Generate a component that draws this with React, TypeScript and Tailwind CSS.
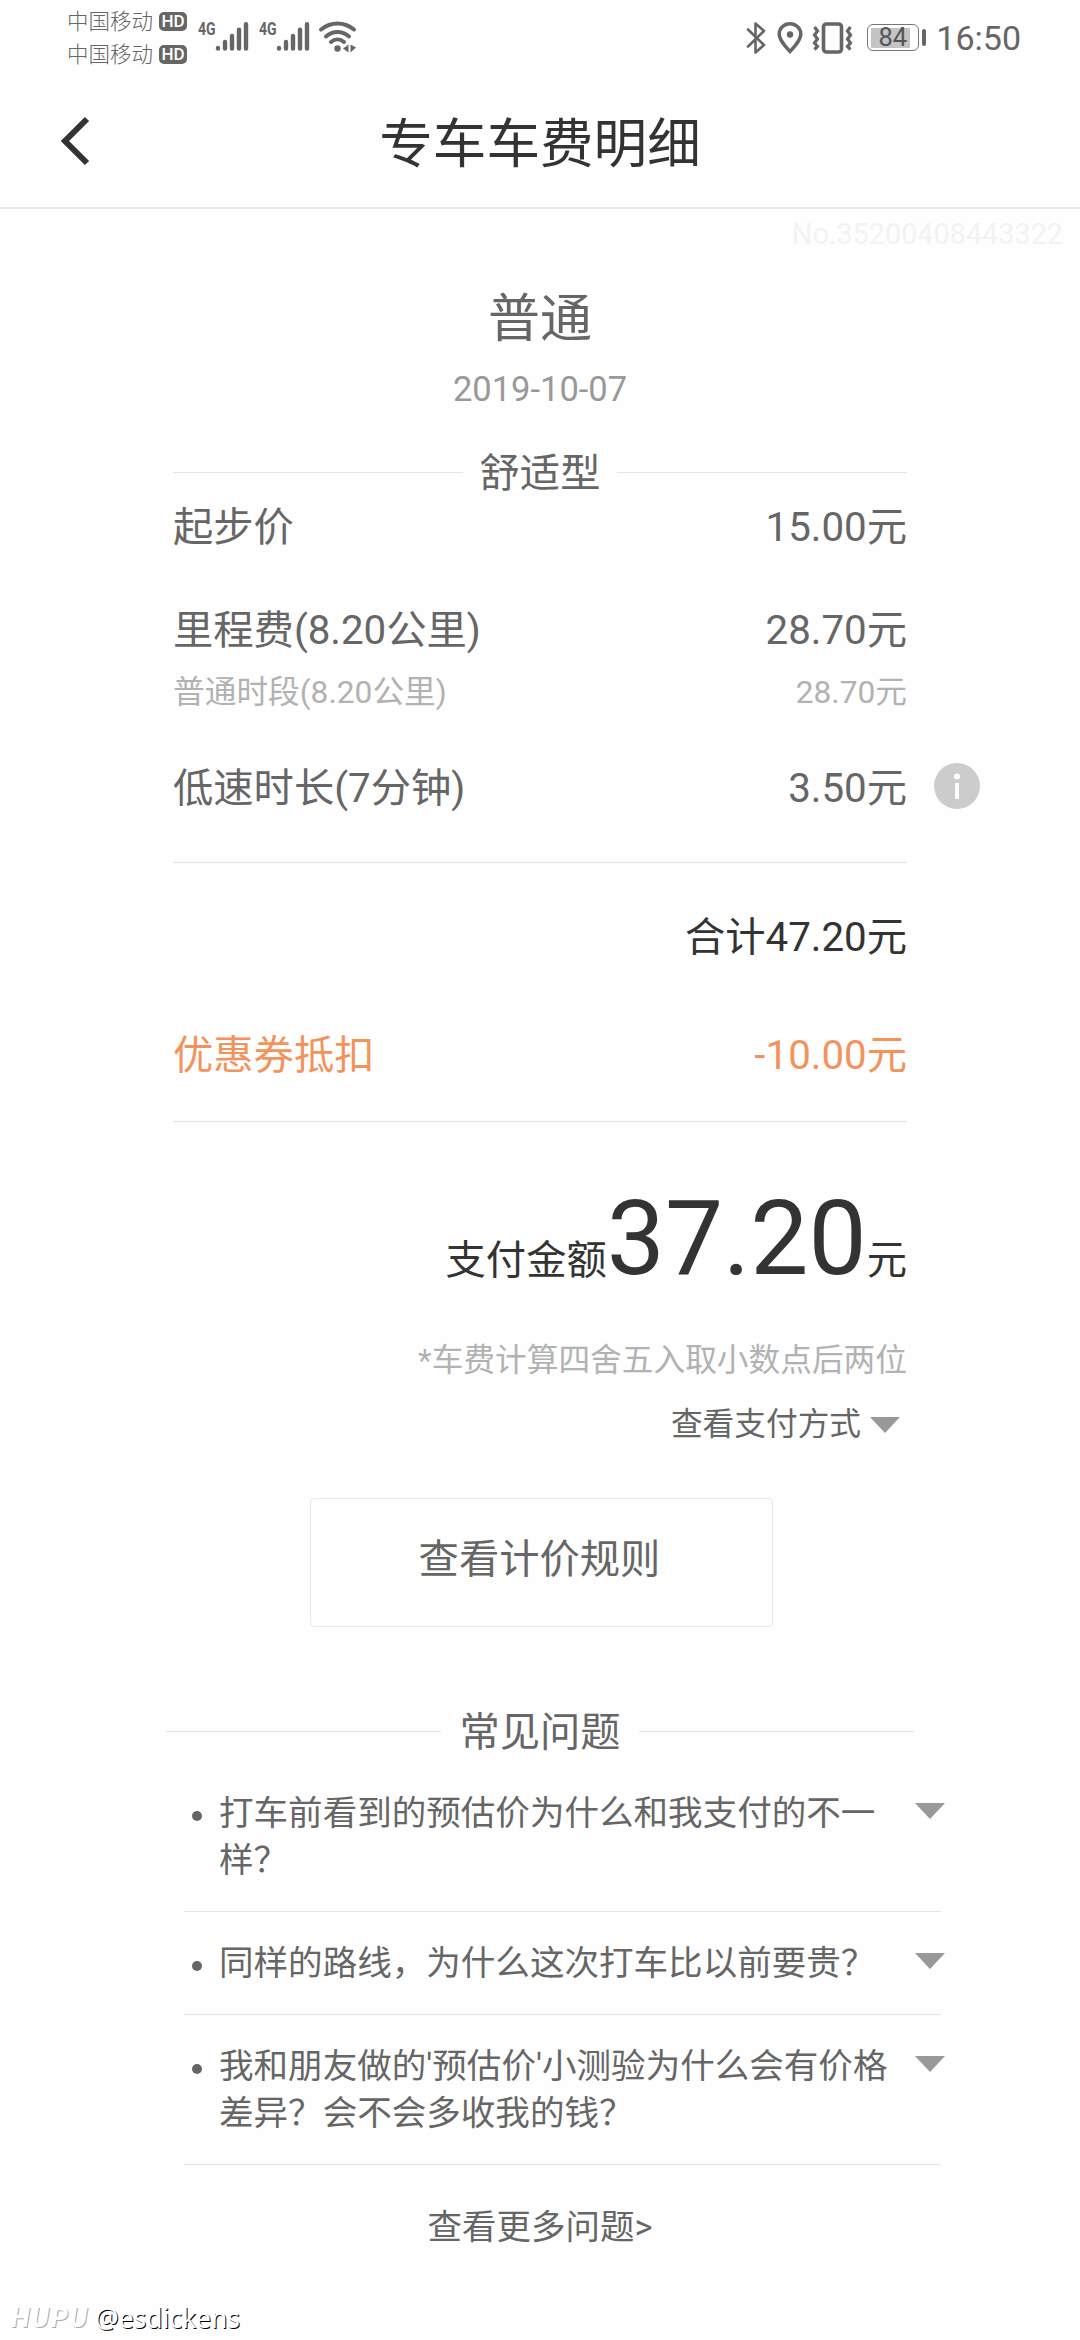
import React from "react";

function Hd() {
  return (
    <span className="flex h-[19px] w-[28px] items-center justify-center rounded-[5px] bg-[#666] font-['Roboto'] text-[17px] leading-none font-medium text-white">
      HD
    </span>
  );
}

function Carrier() {
  return (
    <div className="flex h-[33px] items-center gap-[6px] text-[21.5px] leading-[33px] font-light text-[#666]">
      <span>中国移动</span>
      <Hd />
    </div>
  );
}

function Signal() {
  return (
    <div className="relative h-[34px] w-[51px]">
      <span className="absolute top-[2px] left-0 origin-left scale-x-[0.78] text-[18px] leading-[14px] font-bold text-[#666]">4G</span>
      <svg className="absolute top-0 left-[17px]" width="34" height="34" viewBox="0 0 34 34" stroke="#666" strokeWidth="4.4" strokeLinecap="round">
        <path d="M3 28v.6M10 22v6.6M17 16v12.6M24 9.600v19M31 4.200v24.400" />
      </svg>
    </div>
  );
}

function StatusBar() {
  return (
    <div className="flex h-[75px] items-start justify-between pr-[59px] pl-[67px]">
      <div className="flex">
        <div className="flex w-[122px] flex-col pt-[5px]">
          <Carrier />
          <Carrier />
        </div>
        <div className="flex pt-[20px] pl-[9px]">
          <Signal />
          <div className="w-[10px]" />
          <Signal />
          <svg className="ml-[8px]" width="40" height="34" viewBox="0 0 40 34" fill="none" stroke="#666" strokeWidth="4" strokeLinecap="round">
            <path d="M3 9.500C13 1.500 26 1.500 36 9.500M8 16.500C15 10.500 24 10.500 31 16.500M13 22C17 18.500 22 18.500 26 22" />
            <circle cx="19.500" cy="28.500" r="3.200" fill="#666" stroke="none" />
            <path d="M30.500 24.500v8l-5.500-4zM32.500 24.500v8l5.500-5z" fill="#666" stroke="none" />
          </svg>
        </div>
      </div>
      <div className="flex h-[75px] items-center">
        <svg width="20" height="34" viewBox="0 0 20 34" fill="none" stroke="#666" strokeWidth="2.6" strokeLinejoin="round" strokeLinecap="round">
          <path d="M2 8.500l16 15.500-8.500 7.500V2.500L18 10 2 25.500" />
        </svg>
        <svg className="ml-[11px]" width="26" height="34" viewBox="0 0 26 34" fill="none">
          <path d="M13 2.700C7 2.700 2.200 7.200 2.200 13c0 6 5.800 12 10.800 17.500C18 25 23.800 19 23.800 13 23.800 7.200 19 2.700 13 2.700z" stroke="#666" strokeWidth="3.400" />
          <circle cx="13" cy="13.500" r="3.200" fill="#666" />
        </svg>
        <svg className="ml-[9px]" width="42" height="34" viewBox="0 0 42 34" fill="none" stroke="#666" strokeWidth="3.2">
          <rect x="11.500" y="3" width="18" height="28" rx="3" strokeWidth="3.600" />
          <path d="M2.500 6l3 4-3 4 3 4-3 4 3 3.500-3 3M38.500 6l-3 4 3 4-3 4 3 4-3 3.500 3 3" />
        </svg>
        <div className="ml-[13px] flex h-[27px] w-[52px] items-center rounded-[6px] border-[1.5px] border-[#777] p-[2.5px]">
          <div className="flex h-full w-[39px] items-center justify-center bg-[#c4c4c4] pl-[5px] text-[25.5px] leading-none text-[#555]">84</div>
        </div>
        <div className="ml-[3px] h-[17px] w-[4px] rounded-[2px] bg-[#666]" />
        <span className="ml-[10px] text-[34px] leading-[34px] text-[#666]">16:50</span>
      </div>
    </div>
  );
}

function Row({ label, value, className }: { label?: string; value: string; className: string }) {
  return (
    <div className={"flex justify-between " + className}>
      <span>{label}</span>
      <span>{value}</span>
    </div>
  );
}

function Triangle({ className = "" }: { className?: string }) {
  return (
    <svg className={"shrink-0 " + className} width="30" height="16" viewBox="0 0 30 16" fill="#999">
      <path d="M0 0h30L15 16z" />
    </svg>
  );
}

function TitledRule({ title, className }: { title: string; className: string }) {
  return (
    <div className={"flex items-center text-[40.3px] text-[#666] " + className}>
      <div className="h-px flex-1 bg-[#e5e5e5]" />
      <h2 className="pt-[4px] leading-[46px]">{title}</h2>
      <div className="h-px flex-1 bg-[#e5e5e5]" />
    </div>
  );
}

function Faq({ children }: { children: React.ReactNode }) {
  return (
    <li className="flex border-b border-[#e5e5e5] pt-[28px] pb-[27.6px] text-[34.56px] leading-[46.6px]">
      <span className="mt-[21px] ml-[8px] h-[10px] w-[10px] shrink-0 rounded-full bg-[#666]" />
      <p className="ml-[17px] w-[680px] shrink-0">{children}</p>
      <Triangle className="mt-[13px] -mr-[4px] ml-auto" />
    </li>
  );
}

export default function App() {
  return (
    <div className="flex h-[2340px] w-[1080px] flex-col overflow-hidden bg-[#fefefe] font-['Roboto','Noto_Sans_CJK_SC',sans-serif] text-[#666]">
      <StatusBar />
      <header className="grid h-[134px] grid-cols-[200px_1fr_200px] items-center border-b-2 border-[#e8e9e9] text-[#333]">
        <svg className="ml-[58px]" width="34" height="52" viewBox="0 0 34 52" fill="none" stroke="#333" strokeWidth="6">
          <path d="M29 4L7 26l22 22" />
        </svg>
        <h1 className="pt-[8px] text-center text-[53.600px] leading-[60px]">专车车费明细</h1>
      </header>

      <div className="mt-[8px] pr-[17px] text-right text-[28.8px] leading-[34px] text-[#f3f3f3]">No.35200408443322</div>

      <main className="flex flex-col">
        <div className="mt-[39px] text-center text-[52px] leading-[60px]">普通</div>
        <div className="mt-[19px] text-center text-[34.500px] leading-[40px] text-[#999]">2019-10-07</div>

        <section className="mx-auto flex w-[734px] flex-col text-[40.300px] leading-[50px]">
          <TitledRule title="舒适型" className="mt-[38px] gap-[17px]" />
          <Row className="mt-[6px]" label="起步价" value="15.00元" />
          <Row className="mt-[53px]" label="里程费(8.20公里)" value="28.70元" />
          <Row className="mt-[17px] text-[31.700px] leading-[40px] text-[#b2b2b2]" label="普通时段(8.20公里)" value="28.70元" />
          <div className="relative mt-[51px]">
            <Row className="" label="低速时长(7分钟)" value="3.50元" />
            <svg className="absolute -top-px -right-[73px]" width="46" height="46" viewBox="0 0 46 46">
              <circle cx="23" cy="23" r="23" fill="#ccc" />
              <circle cx="23" cy="13.500" r="3" fill="#fff" />
              <rect x="21" y="20" width="4" height="16" fill="#fff" />
            </svg>
          </div>
          <div className="mt-[48px] h-px bg-[#e5e5e5]" />
          <Row className="mt-[50px] text-[#333]" value="合计47.20元" />
          <Row className="mt-[68px] text-[#f3935c]" label="优惠券抵扣" value="-10.00元" />
          <div className="mt-[40px] h-px bg-[#e5e5e5]" />
          <div className="mt-[57px] h-[142px] text-right leading-[120px] text-[#333]">
            支付金额<span className="text-[103.500px]">37.20</span>元
          </div>
          <div className="mt-[20px] text-right text-[31.700px] leading-[40px] text-[#b2b2b2]">*车费计算四舍五入取小数点后两位</div>
          <button className="mt-[24px] flex items-center justify-end gap-[9px] pr-[7px] text-[31.700px] leading-[40px]">
            查看支付方式
            <Triangle />
          </button>
        </section>

        <button className="mt-[53px] ml-[310px] h-[129px] w-[463px] rounded-[4px] border border-[#e8e8e8] pr-[4px] pb-[5px] text-[40.300px] leading-[50px]">
          查看计价规则
        </button>

        <TitledRule title="常见问题" className="mx-auto mt-[79px] w-[748px] gap-[18px]" />
        <ul className="mt-[6px] ml-[184px] flex w-[757px] flex-col">
          <Faq>
            打车前看到的预估价为什么和我支付的不一
            <br />
            样？
          </Faq>
          <Faq>同样的路线，为什么这次打车比以前要贵？</Faq>
          <Faq>
            我和朋友做的'预估价'小测验为什么会有价格
            <br />
            差异？会不会多收我的钱？
          </Faq>
        </ul>
        <a className="mt-[39px] text-center text-[34.500px] leading-[46px]">查看更多问题&gt;</a>
      </main>

      <footer className="mt-auto flex h-[44px] items-center pl-[11px] leading-[40px]">
        <span className="w-[84px] font-['Roboto'] text-[27px] font-bold tracking-[2px] text-white italic [text-shadow:1px_1px_0_#aaa]">HUPU</span>
        <span className="font-['Noto_Sans'] text-[26.4px] text-white [text-shadow:1px_1px_0_#000]">@esdickens</span>
      </footer>
    </div>
  );
}
